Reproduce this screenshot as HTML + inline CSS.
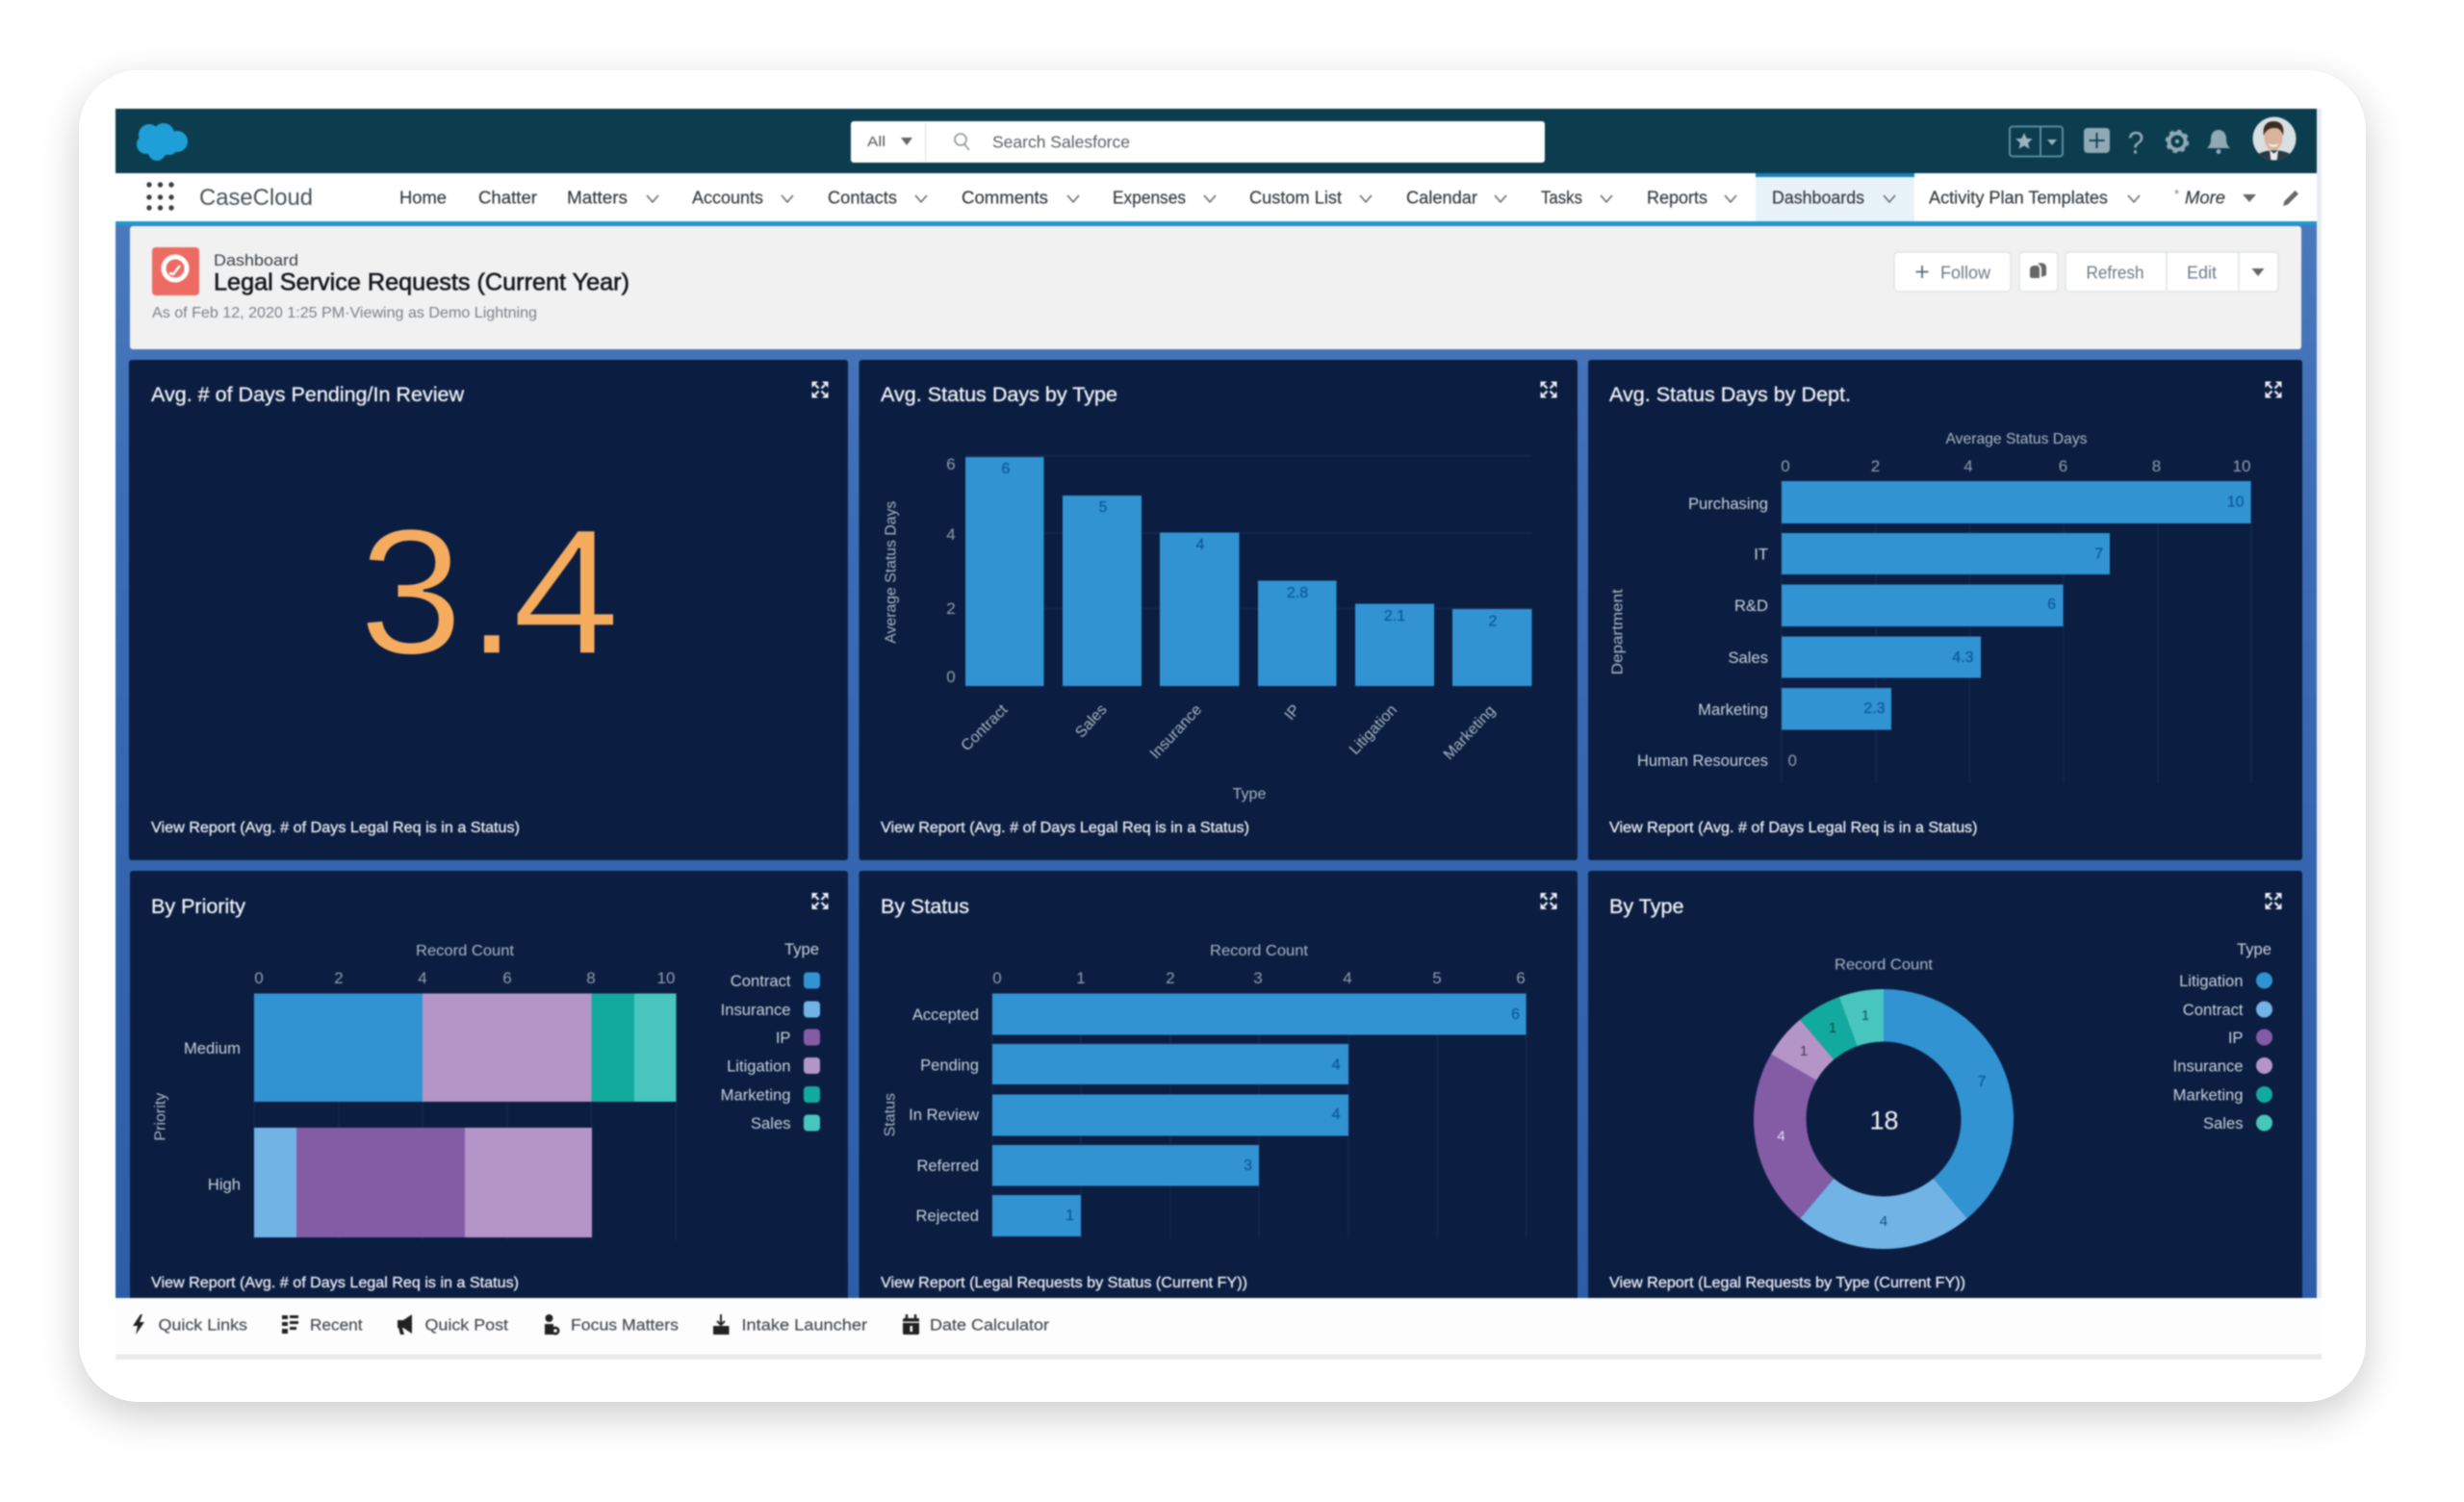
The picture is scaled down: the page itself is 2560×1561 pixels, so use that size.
<!DOCTYPE html>
<html><head><meta charset="utf-8"><title>Legal Service Requests</title>
<style>
html,body{margin:0;padding:0;background:#fff;width:2560px;height:1561px;overflow:hidden}
#card{position:absolute;left:82px;top:73px;width:2376px;height:1384px;background:#fff;border-radius:62px;box-shadow:0 14px 42px rgba(0,0,0,.2)}
svg{position:absolute;left:0;top:0;filter:blur(.75px)}
text{font-family:"Liberation Sans",sans-serif;dominant-baseline:central;translate:0 .7px}
.n{font-size:18px;fill:#33383d;stroke:#33383d;stroke-width:.15}
.t{font-size:21px;fill:#eef0f4;stroke:#eef0f4;stroke-width:.3}
.f{font-size:16px;fill:#e6eaef;stroke:#e6eaef;stroke-width:.3}
.a{font-size:16px;fill:#aab5c4}
.k{font-size:17px;fill:#8f9db0}
.l{font-size:16.600px;fill:#c8d0da}
.v{font-size:16px;fill:#0a5a9e;stroke:#0a5a9e;stroke-width:.25}
.b{font-size:17px;fill:#44494f;stroke:#44494f;stroke-width:.15}
.bt{font-size:18px;fill:#6d7b87}
.e{text-anchor:end}.m{text-anchor:middle}
.ch{fill:none;stroke:#666;stroke-width:1.5}
</style></head>
<body>
<div id="card"></div>
<svg width="2560" height="1561" viewBox="0 0 2560 1561" xmlns="http://www.w3.org/2000/svg">
<defs>
<linearGradient id="bg" x1="0" y1="0" x2="0" y2="1"><stop offset="0" stop-color="#4a78bc"/><stop offset=".3" stop-color="#3a6bb4"/><stop offset="1" stop-color="#2c5da6"/></linearGradient>
<clipPath id="av"><circle cx="2363" cy="144" r="22.500"/></clipPath>
<g id="x">
<path d="M-8.500-8.500h6.500l-6.500 6.500zM8.500-8.500h-6.500l6.500 6.500zM-8.500 8.500h6.500l-6.500-6.500zM8.500 8.500h-6.500l6.500-6.500z" fill="#eef1f5"/>
<path d="M-5-5L-1.500-1.500M5-5L1.500-1.500M-5 5L-1.500 1.500M5 5L1.500 1.500" stroke="#eef1f5" stroke-width="2.200"/>
</g>
</defs>

<!-- edge strip -->
<rect x="2407" y="113" width="5" height="1300" fill="#e8ecf3"/>
<!-- header -->
<rect x="120" y="113" width="2287" height="67" fill="#0b3d4e"/>
<g fill="#1e9fd8"><circle cx="155" cy="140" r="11"/><circle cx="170" cy="139" r="11"/><circle cx="184" cy="147" r="11"/><circle cx="164" cy="150" r="14"/><circle cx="152" cy="150" r="10"/><circle cx="176" cy="152" r="9"/><circle cx="163" cy="158" r="9"/></g>
<rect x="884" y="126" width="721" height="43" rx="3" fill="#fff"/>
<rect x="961" y="128" width="1.500" height="39" fill="#e4e6e8"/>
<text x="901" y="147" font-size="15" fill="#555" textLength="19" lengthAdjust="spacingAndGlyphs">All</text>
<path d="M936 143h12l-6 8z" fill="#666"/>
<circle cx="998" cy="145" r="6" fill="none" stroke="#8b949c" stroke-width="1.600"/><path d="M1002 150l5 6" stroke="#8b949c" stroke-width="1.600"/>
<text x="1031" y="147" font-size="17.500px" fill="#5b6167" textLength="143" lengthAdjust="spacingAndGlyphs">Search Salesforce</text>
<!-- header right icons -->
<rect x="2088" y="131.500" width="55" height="31" rx="3" fill="none" stroke="#5f95a6" stroke-width="1.800"/>
<path d="M2120 131v32" stroke="#5f95a6" stroke-width="1.800"/>
<path d="M2103 138l2.600 5.800 6.200.6-4.700 4.100 1.400 6.200-5.500-3.300-5.500 3.300 1.400-6.200-4.700-4.100 6.200-.6z" fill="#9db2bd"/>
<path d="M2127 145h10l-5 6z" fill="#9db2bd"/>
<rect x="2165" y="133" width="27" height="26" rx="4" fill="#8fa9b5"/><path d="M2178.500 138v16M2170.500 146h16" stroke="#0b3b4d" stroke-width="1.800"/>
<text x="2219" y="148" font-size="32" fill="#8fa9b5" class="m" textLength="17" lengthAdjust="spacingAndGlyphs">?</text>
<circle cx="2262" cy="147" r="8.500" fill="none" stroke="#8fa9b5" stroke-width="4"/>
<circle cx="2262" cy="147" r="11" fill="none" stroke="#8fa9b5" stroke-width="2.500" stroke-dasharray="4.500 4.100"/>
<circle cx="2262" cy="147" r="2.200" fill="#8fa9b5"/>
<path d="M2293 154c3-3 4-5 4-10 0-5 3-9 8-9s8 4 8 9c0 5 1 7 4 10z" fill="#8fa9b5"/><circle cx="2305" cy="157.500" r="2.500" fill="#8fa9b5"/>
<circle cx="2363" cy="144" r="22.500" fill="#d8dfe3"/>
<g clip-path="url(#av)">
<path d="M2340 172c1-12 9-15 23-16 13 1 22 4 24 16z" fill="#2b3944"/>
<path d="M2358 156l4.500 3.500 4.500-3.500-1.500 12h-6z" fill="#e6eaed"/>
<ellipse cx="2362" cy="143" rx="9.500" ry="13.500" fill="#d9b49b"/>
<path d="M2352 141c-2-11 4-15 10-15 7 0 12 4 10 15-2-6-4-8-9-8s-9 2-11 8z" fill="#3d2c22"/>
<path d="M2357 149c3 2 7 2 10 0l-1 2.500c-2 1.500-6 1.500-8 0z" fill="#f7f2ee"/>
</g>

<!-- nav -->
<rect x="120" y="180" width="2287" height="50" fill="#fff"/>
<rect x="1824" y="180" width="165" height="50" fill="#e8f3f9"/>
<rect x="1824" y="180" width="165" height="4" fill="#1a7fb8"/>
<rect x="120" y="230" width="2287" height="4" fill="#1a9ad0"/>
<g fill="#3a3f44"><circle cx="155" cy="192" r="2.700"/><circle cx="166.500" cy="192" r="2.700"/><circle cx="178" cy="192" r="2.700"/><circle cx="155" cy="205" r="2.700"/><circle cx="166.500" cy="205" r="2.700"/><circle cx="178" cy="205" r="2.700"/><circle cx="155" cy="216" r="2.700"/><circle cx="166.500" cy="216" r="2.700"/><circle cx="178" cy="216" r="2.700"/></g>
<text x="207" y="205" font-size="24" fill="#4c5258" textLength="118" lengthAdjust="spacingAndGlyphs">CaseCloud</text>
<text class="n" x="415" y="205" textLength="49" lengthAdjust="spacingAndGlyphs">Home</text>
<text class="n" x="497" y="205" textLength="61" lengthAdjust="spacingAndGlyphs">Chatter</text>
<text class="n" x="589" y="205" textLength="63" lengthAdjust="spacingAndGlyphs">Matters</text>
<text class="n" x="719" y="205" textLength="74" lengthAdjust="spacingAndGlyphs">Accounts</text>
<text class="n" x="860" y="205" textLength="72" lengthAdjust="spacingAndGlyphs">Contacts</text>
<text class="n" x="999" y="205" textLength="90" lengthAdjust="spacingAndGlyphs">Comments</text>
<text class="n" x="1156" y="205" textLength="76" lengthAdjust="spacingAndGlyphs">Expenses</text>
<text class="n" x="1298" y="205" textLength="96" lengthAdjust="spacingAndGlyphs">Custom List</text>
<text class="n" x="1461" y="205" textLength="74" lengthAdjust="spacingAndGlyphs">Calendar</text>
<text class="n" x="1601" y="205" textLength="43" lengthAdjust="spacingAndGlyphs">Tasks</text>
<text class="n" x="1711" y="205" textLength="63" lengthAdjust="spacingAndGlyphs">Reports</text>
<text class="n" x="1841" y="205" textLength="96" lengthAdjust="spacingAndGlyphs">Dashboards</text>
<text class="n" x="2004" y="205" textLength="186" lengthAdjust="spacingAndGlyphs">Activity Plan Templates</text>
<text x="2259" y="201" font-size="13" fill="#778">*</text>
<text class="n" x="2270" y="205" font-style="italic" textLength="42" lengthAdjust="spacingAndGlyphs">More</text>
<g class="ch">
<path d="M672 203l6 7 6-7"/><path d="M812 203l6 7 6-7"/><path d="M951 203l6 7 6-7"/><path d="M1109 203l6 7 6-7"/><path d="M1251 203l6 7 6-7"/><path d="M1413 203l6 7 6-7"/><path d="M1553 203l6 7 6-7"/><path d="M1663 203l6 7 6-7"/><path d="M1792 203l6 7 6-7"/><path d="M1957 203l6 7 6-7"/><path d="M2211 203l6 7 6-7"/>
</g>
<path d="M2330 202h14l-7 8z" fill="#666"/>
<path d="M2372 214l1.500-5 11-11 3.500 3.500-11 11z" fill="#666"/>

<!-- blue backdrop -->
<rect x="120" y="234" width="2287" height="1115" fill="url(#bg)"/>
<!-- title panel -->
<rect x="135" y="235" width="2256" height="128" rx="3" fill="#f1f1f1"/>
<rect x="158" y="257" width="49" height="50" rx="4" fill="#ee6b63"/>
<circle cx="182" cy="279" r="12" fill="none" stroke="#fff" stroke-width="5"/>
<path d="M176 284l4 1 7-9" fill="none" stroke="#fff" stroke-width="2.500"/>
<text x="222" y="270" font-size="17" fill="#3c4147" textLength="88" lengthAdjust="spacingAndGlyphs">Dashboard</text>
<text x="222" y="293" font-size="25" fill="#16191d" stroke="#16191d" stroke-width=".6" textLength="432" lengthAdjust="spacingAndGlyphs">Legal Service Requests (Current Year)</text>
<text x="158" y="325" font-size="16" fill="#7c8187" textLength="400" lengthAdjust="spacingAndGlyphs">As of Feb 12, 2020 1:25 PM·Viewing as Demo Lightning</text>
<!-- buttons -->
<g fill="#fff" stroke="#e2e4e6" stroke-width="1.500">
<rect x="1968" y="262" width="121" height="41" rx="4"/><rect x="2098" y="262" width="40" height="41" rx="4"/><rect x="2146" y="262" width="221" height="41" rx="4"/>
</g>
<path d="M2251 262v41M2326 262v41" stroke="#e2e4e6" stroke-width="1.500"/>
<path d="M1997 276v13M1990.500 282.500h13" stroke="#5d6b77" stroke-width="1.800"/>
<text class="bt" x="2016" y="283" textLength="52" lengthAdjust="spacingAndGlyphs">Follow</text>
<path d="M2109 287v-7c0-2 2-4 4-4h3c2 0 3 2 3 4v9h-8c-1 0-2-1-2-2z" fill="#666"/><path d="M2117 274c5-2 9 0 9 4v8l-5 2v-9c0-2-2-4-4-5z" fill="#666"/>
<text class="bt m" x="2197.500" y="283" textLength="60" lengthAdjust="spacingAndGlyphs">Refresh</text>
<text class="bt m" x="2287.500" y="283" textLength="31" lengthAdjust="spacingAndGlyphs">Edit</text>
<path d="M2339.500 279h13l-6.500 8z" fill="#666"/>

<!-- panels -->
<g fill="#0b1e42">
<rect x="134" y="374" width="747" height="520" rx="3"/>
<rect x="892.500" y="374" width="746.500" height="520" rx="3"/>
<rect x="1650" y="374" width="742" height="520" rx="3"/>
<path d="M135 1349V908a3 3 0 0 1 3-3H878a3 3 0 0 1 3 3V1349z"/>
<path d="M892.500 1349V908a3 3 0 0 1 3-3H1636a3 3 0 0 1 3 3V1349z"/>
<path d="M1650 1349V908a3 3 0 0 1 3-3H2389a3 3 0 0 1 3 3V1349z"/>
</g>
<use href="#x" x="852" y="405"/><use href="#x" x="1609" y="405"/><use href="#x" x="2362" y="405"/>
<use href="#x" x="852" y="936.500"/><use href="#x" x="1609" y="936.500"/><use href="#x" x="2362" y="936.500"/>

<text class="t" x="157" y="410" textLength="325" lengthAdjust="spacingAndGlyphs">Avg. # of Days Pending/In Review</text>
<text class="t" x="915" y="410" textLength="246" lengthAdjust="spacingAndGlyphs">Avg. Status Days by Type</text>
<text class="t" x="1672" y="410" textLength="251" lengthAdjust="spacingAndGlyphs">Avg. Status Days by Dept.</text>
<text class="t" x="157" y="942" textLength="98" lengthAdjust="spacingAndGlyphs">By Priority</text>
<text class="t" x="915" y="942" textLength="92" lengthAdjust="spacingAndGlyphs">By Status</text>
<text class="t" x="1672" y="942" textLength="77.500" lengthAdjust="spacingAndGlyphs">By Type</text>

<text class="f" x="157" y="860" textLength="383" lengthAdjust="spacingAndGlyphs">View Report (Avg. # of Days Legal Req is in a Status)</text>
<text class="f" x="915" y="860" textLength="383" lengthAdjust="spacingAndGlyphs">View Report (Avg. # of Days Legal Req is in a Status)</text>
<text class="f" x="1672" y="860" textLength="382.500" lengthAdjust="spacingAndGlyphs">View Report (Avg. # of Days Legal Req is in a Status)</text>
<text class="f" x="157" y="1333" textLength="382" lengthAdjust="spacingAndGlyphs">View Report (Avg. # of Days Legal Req is in a Status)</text>
<text class="f" x="915" y="1333" textLength="381" lengthAdjust="spacingAndGlyphs">View Report (Legal Requests by Status (Current FY))</text>
<text class="f" x="1672" y="1333" textLength="370" lengthAdjust="spacingAndGlyphs">View Report (Legal Requests by Type (Current FY))</text>

<!-- 3.4 -->
<g fill="#f6ac5e" stroke="#0b1e42" stroke-width="2" style="font-size:186px">
<text x="373" y="615" textLength="108" lengthAdjust="spacingAndGlyphs">3</text>
<text x="485" y="615">.</text>
<text x="532" y="615" textLength="112" lengthAdjust="spacingAndGlyphs">4</text>
</g>

<!-- chart 2 -->
<path d="M1003 473.500H1591M1003 554H1591M1003 632.500H1591" stroke="#162a50" stroke-width="1.200"/>
<g fill="#3193d2">
<rect x="1003" y="475" width="81.500" height="238"/><rect x="1104" y="515" width="82" height="198"/><rect x="1205" y="553.500" width="82.500" height="159.500"/><rect x="1307" y="603.500" width="81.500" height="109.500"/><rect x="1408" y="627.500" width="82" height="85.500"/><rect x="1509" y="633" width="82.500" height="80"/>
</g>
<text class="k" x="988" y="482" text-anchor="middle">6</text><text class="k" x="988" y="555" text-anchor="middle">4</text><text class="k" x="988" y="632" text-anchor="middle">2</text><text class="k" x="988" y="703" text-anchor="middle">0</text>
<text class="a m" transform="translate(926 594) rotate(-90)" textLength="148" lengthAdjust="spacingAndGlyphs">Average Status Days</text>
<text class="v m" x="1045" y="487">6</text><text class="v m" x="1146" y="527">5</text><text class="v m" x="1247" y="566">4</text><text class="v m" x="1348" y="616">2.8</text><text class="v m" x="1449" y="640">2.1</text><text class="v m" x="1551" y="645.500">2</text>
<text class="a m" transform="translate(1023 756) rotate(-45)">Contract</text>
<text class="a m" transform="translate(1134 749) rotate(-48)">Sales</text>
<text class="a m" transform="translate(1222 760) rotate(-47)">Insurance</text>
<text class="a m" transform="translate(1343 740) rotate(-50)">IP</text>
<text class="a m" transform="translate(1427 758) rotate(-47)">Litigation</text>
<text class="a m" transform="translate(1527 761) rotate(-47)">Marketing</text>
<text class="a m" x="1298" y="825">Type</text>

<!-- chart 3 -->
<path d="M1851 500V814M1949 500V814M2046.500 500V814M2144 500V814M2242 500V814M2339 500V814" stroke="#162a50" stroke-width="1.200"/>
<g fill="#3193d2"><rect x="1851" y="500" width="487.500" height="44"/><rect x="1851" y="554" width="341" height="43"/><rect x="1851" y="607.500" width="292.500" height="43.500"/><rect x="1851" y="661.500" width="207" height="43"/><rect x="1851" y="715" width="114" height="43.500"/></g>
<text class="a m" x="2095" y="456" textLength="147" lengthAdjust="spacingAndGlyphs">Average Status Days</text>
<text class="k" x="1855" y="484" text-anchor="middle">0</text><text class="k" x="1948.500" y="484" text-anchor="middle">2</text><text class="k" x="2045" y="484" text-anchor="middle">4</text><text class="k" x="2143.500" y="484" text-anchor="middle">6</text><text class="k" x="2240.500" y="484" text-anchor="middle">8</text><text class="k" x="2329" y="484" text-anchor="middle">10</text>
<text class="l e" x="1837" y="523">Purchasing</text><text class="l e" x="1837" y="575.500">IT</text><text class="l e" x="1837" y="629">R&amp;D</text><text class="l e" x="1837" y="683">Sales</text><text class="l e" x="1837" y="737">Marketing</text><text class="l e" x="1837" y="790" textLength="136" lengthAdjust="spacingAndGlyphs">Human Resources</text>
<text class="v e" x="2331.500" y="521.500">10</text><text class="v e" x="2185" y="575.500">7</text><text class="v e" x="2136" y="628">6</text><text class="v e" x="2050.500" y="683">4.3</text><text class="v e" x="1958.500" y="736">2.3</text>
<text class="k" x="1857.500" y="790">0</text>
<text class="a m" transform="translate(1681 656) rotate(-90)" textLength="89" lengthAdjust="spacingAndGlyphs">Department</text>

<!-- chart 4 -->
<path d="M264 1032V1289M352 1032V1289M439 1032V1289M527 1032V1289M614.500 1032V1289M702.500 1032V1289" stroke="#162a50" stroke-width="1.200"/>
<rect x="264" y="1032.500" width="175" height="112.500" fill="#3193d2"/><rect x="439" y="1032.500" width="175.500" height="112.500" fill="#b595c8"/><rect x="614.500" y="1032.500" width="44.500" height="112.500" fill="#12aa9e"/><rect x="659" y="1032.500" width="43.500" height="112.500" fill="#48c5bf"/>
<rect x="264" y="1172" width="44" height="114" fill="#72b3e6"/><rect x="308" y="1172" width="175" height="114" fill="#845ca6"/><rect x="483" y="1172" width="132" height="114" fill="#b595c8"/>
<text class="a m" x="483" y="988" textLength="102" lengthAdjust="spacingAndGlyphs">Record Count</text>
<text class="k" x="269" y="1016" text-anchor="middle">0</text><text class="k" x="352" y="1016" text-anchor="middle">2</text><text class="k" x="439" y="1016" text-anchor="middle">4</text><text class="k" x="527" y="1016" text-anchor="middle">6</text><text class="k" x="614" y="1016" text-anchor="middle">8</text><text class="k" x="692" y="1016" text-anchor="middle">10</text>
<text class="l e" x="250" y="1089">Medium</text><text class="l e" x="250" y="1230.500">High</text>
<text class="a m" transform="translate(167 1160) rotate(-90)">Priority</text>
<text class="l e" x="851" y="986">Type</text>
<text class="l e" x="821.500" y="1019">Contract</text><text class="l e" x="821.500" y="1049">Insurance</text><text class="l e" x="821.500" y="1078">IP</text><text class="l e" x="821.500" y="1107.500">Litigation</text><text class="l e" x="821.500" y="1137.500">Marketing</text><text class="l e" x="821.500" y="1167">Sales</text>
<rect x="835" y="1010.500" width="17" height="17" rx="4" fill="#3193d2"/><rect x="835" y="1040.500" width="17" height="17" rx="4" fill="#72b3e6"/><rect x="835" y="1069.500" width="17" height="17" rx="4" fill="#845ca6"/><rect x="835" y="1099" width="17" height="17" rx="4" fill="#b595c8"/><rect x="835" y="1129" width="17" height="17" rx="4" fill="#12aa9e"/><rect x="835" y="1158.500" width="17" height="17" rx="4" fill="#48c5bf"/>

<!-- chart 5 -->
<path d="M1031 1032V1287M1123 1032V1287M1216 1032V1287M1308 1032V1287M1401 1032V1287M1493.500 1032V1287M1585.500 1032V1287" stroke="#162a50" stroke-width="1.200"/>
<g fill="#3193d2"><rect x="1031" y="1032.500" width="554.500" height="43"/><rect x="1031" y="1085" width="370" height="42"/><rect x="1031" y="1137.500" width="370" height="43"/><rect x="1031" y="1190" width="277" height="42.500"/><rect x="1031" y="1242" width="92" height="43"/></g>
<text class="a m" x="1308" y="988" textLength="102" lengthAdjust="spacingAndGlyphs">Record Count</text>
<text class="k" x="1036" y="1016" text-anchor="middle">0</text><text class="k" x="1123" y="1016" text-anchor="middle">1</text><text class="k" x="1216" y="1016" text-anchor="middle">2</text><text class="k" x="1307" y="1016" text-anchor="middle">3</text><text class="k" x="1400" y="1016" text-anchor="middle">4</text><text class="k" x="1493" y="1016" text-anchor="middle">5</text><text class="k" x="1580" y="1016" text-anchor="middle">6</text>
<text class="l e" x="1017" y="1054">Accepted</text><text class="l e" x="1017" y="1106.500">Pending</text><text class="l e" x="1017" y="1158">In Review</text><text class="l e" x="1017" y="1211">Referred</text><text class="l e" x="1017" y="1263">Rejected</text>
<text class="v e" x="1579" y="1054">6</text><text class="v e" x="1392.500" y="1106.500">4</text><text class="v e" x="1392.500" y="1158">4</text><text class="v e" x="1301" y="1211">3</text><text class="v e" x="1116" y="1263">1</text>
<text class="a m" transform="translate(925 1158) rotate(-90)">Status</text>

<!-- chart 6 donut -->
<text class="a m" x="1957" y="1002.500" textLength="102" lengthAdjust="spacingAndGlyphs">Record Count</text>
<path d="M1957 1028A135 135 0 0 1 2043.800 1266.400L2008.700 1224.700A80.500 80.500 0 0 0 1957 1082.500Z" fill="#3193d2"/>
<path d="M2043.800 1266.400A135 135 0 0 1 1870.200 1266.400L1905.300 1224.700A80.500 80.500 0 0 0 2008.700 1224.700Z" fill="#72b3e6"/>
<path d="M1870.200 1266.400A135 135 0 0 1 1840.100 1095.500L1887.300 1122.750A80.500 80.500 0 0 0 1905.300 1224.700Z" fill="#845ca6"/>
<path d="M1840.100 1095.500A135 135 0 0 1 1870.200 1059.600L1905.300 1101.300A80.500 80.500 0 0 0 1887.300 1122.750Z" fill="#b595c8"/>
<path d="M1870.200 1059.600A135 135 0 0 1 1910.800 1036.100L1929.500 1087.400A80.500 80.500 0 0 0 1905.300 1101.300Z" fill="#12aa9e"/>
<path d="M1910.800 1036.100A135 135 0 0 1 1957 1028L1957 1082.500A80.500 80.500 0 0 0 1929.500 1087.400Z" fill="#48c5bf"/>
<text class="m" x="1957.500" y="1164" font-size="27" fill="#f1f3f6">18</text>
<text class="v m" x="2059" y="1124">7</text><text class="m" x="1957" y="1269" font-size="15" fill="#14507f">4</text><text class="m" x="1850.500" y="1180.500" font-size="15" fill="#e6dcef">4</text><text class="m" x="1874" y="1092" font-size="15" fill="#4a3a5c">1</text><text class="m" x="1904" y="1068" font-size="15" fill="#0b4a45">1</text><text class="m" x="1938" y="1055" font-size="15" fill="#0e5a55">1</text>
<text class="l e" x="2360" y="986">Type</text>
<text class="l e" x="2330.500" y="1019">Litigation</text><text class="l e" x="2330.500" y="1049">Contract</text><text class="l e" x="2330.500" y="1078">IP</text><text class="l e" x="2330.500" y="1107.500">Insurance</text><text class="l e" x="2330.500" y="1137.500">Marketing</text><text class="l e" x="2330.500" y="1167">Sales</text>
<circle cx="2352.500" cy="1019" r="8.500" fill="#3193d2"/><circle cx="2352.500" cy="1049" r="8.500" fill="#72b3e6"/><circle cx="2352.500" cy="1078" r="8.500" fill="#845ca6"/><circle cx="2352.500" cy="1107.500" r="8.500" fill="#b595c8"/><circle cx="2352.500" cy="1137.500" r="8.500" fill="#12aa9e"/><circle cx="2352.500" cy="1167" r="8.500" fill="#48c5bf"/>

<!-- utility bar -->
<rect x="120" y="1349" width="2292" height="58" fill="#fdfdfd"/>
<rect x="120" y="1407.500" width="2292" height="5.500" fill="#ebebeb"/>
<path d="M146 1366l-8 12h5l-2 9 9-13h-5l3-8z" fill="#222"/>
<text class="b" x="164.500" y="1376.500" textLength="92.500" lengthAdjust="spacingAndGlyphs">Quick Links</text>
<path d="M293 1367h6v4h-6zM293 1374h6v4h-6zM293 1381h6v5h-6zM301 1367h9v3h-9zM301 1373h9v3h-9zM301 1379h7v3h-7z" fill="#222"/>
<text class="b" x="322" y="1376.500" textLength="54.500" lengthAdjust="spacingAndGlyphs">Recent</text>
<path d="M413 1372h6l9-6v20l-9-6h-1l2 7h-4l-2-7h-1z" fill="#222"/>
<text class="b" x="441.500" y="1376.500" textLength="86.500" lengthAdjust="spacingAndGlyphs">Quick Post</text>
<circle cx="570.500" cy="1370" r="4" fill="#222"/><path d="M566 1376h9v11h-9z" fill="#222"/><circle cx="577" cy="1383" r="4.500" fill="#222"/><circle cx="577" cy="1383" r="1.800" fill="#fff"/>
<text class="b" x="593" y="1376.500" textLength="112" lengthAdjust="spacingAndGlyphs">Focus Matters</text>
<path d="M741 1378h16.500v9h-16.500z" fill="#222"/><path d="M749 1366v11M745 1373l4 4 4-4" fill="none" stroke="#222" stroke-width="2"/>
<text class="b" x="770.500" y="1376.500" textLength="130.500" lengthAdjust="spacingAndGlyphs">Intake Launcher</text>
<rect x="938" y="1370" width="17" height="17" rx="1.500" fill="#222"/><path d="M942 1366v5M951 1366v5" stroke="#222" stroke-width="2.500"/><rect x="938" y="1373.500" width="17" height="1.300" fill="#fff"/><rect x="945.500" y="1378" width="2.500" height="6" fill="#fff"/>
<text class="b" x="966" y="1376.500" textLength="124" lengthAdjust="spacingAndGlyphs">Date Calculator</text>
</svg>
</body></html>
